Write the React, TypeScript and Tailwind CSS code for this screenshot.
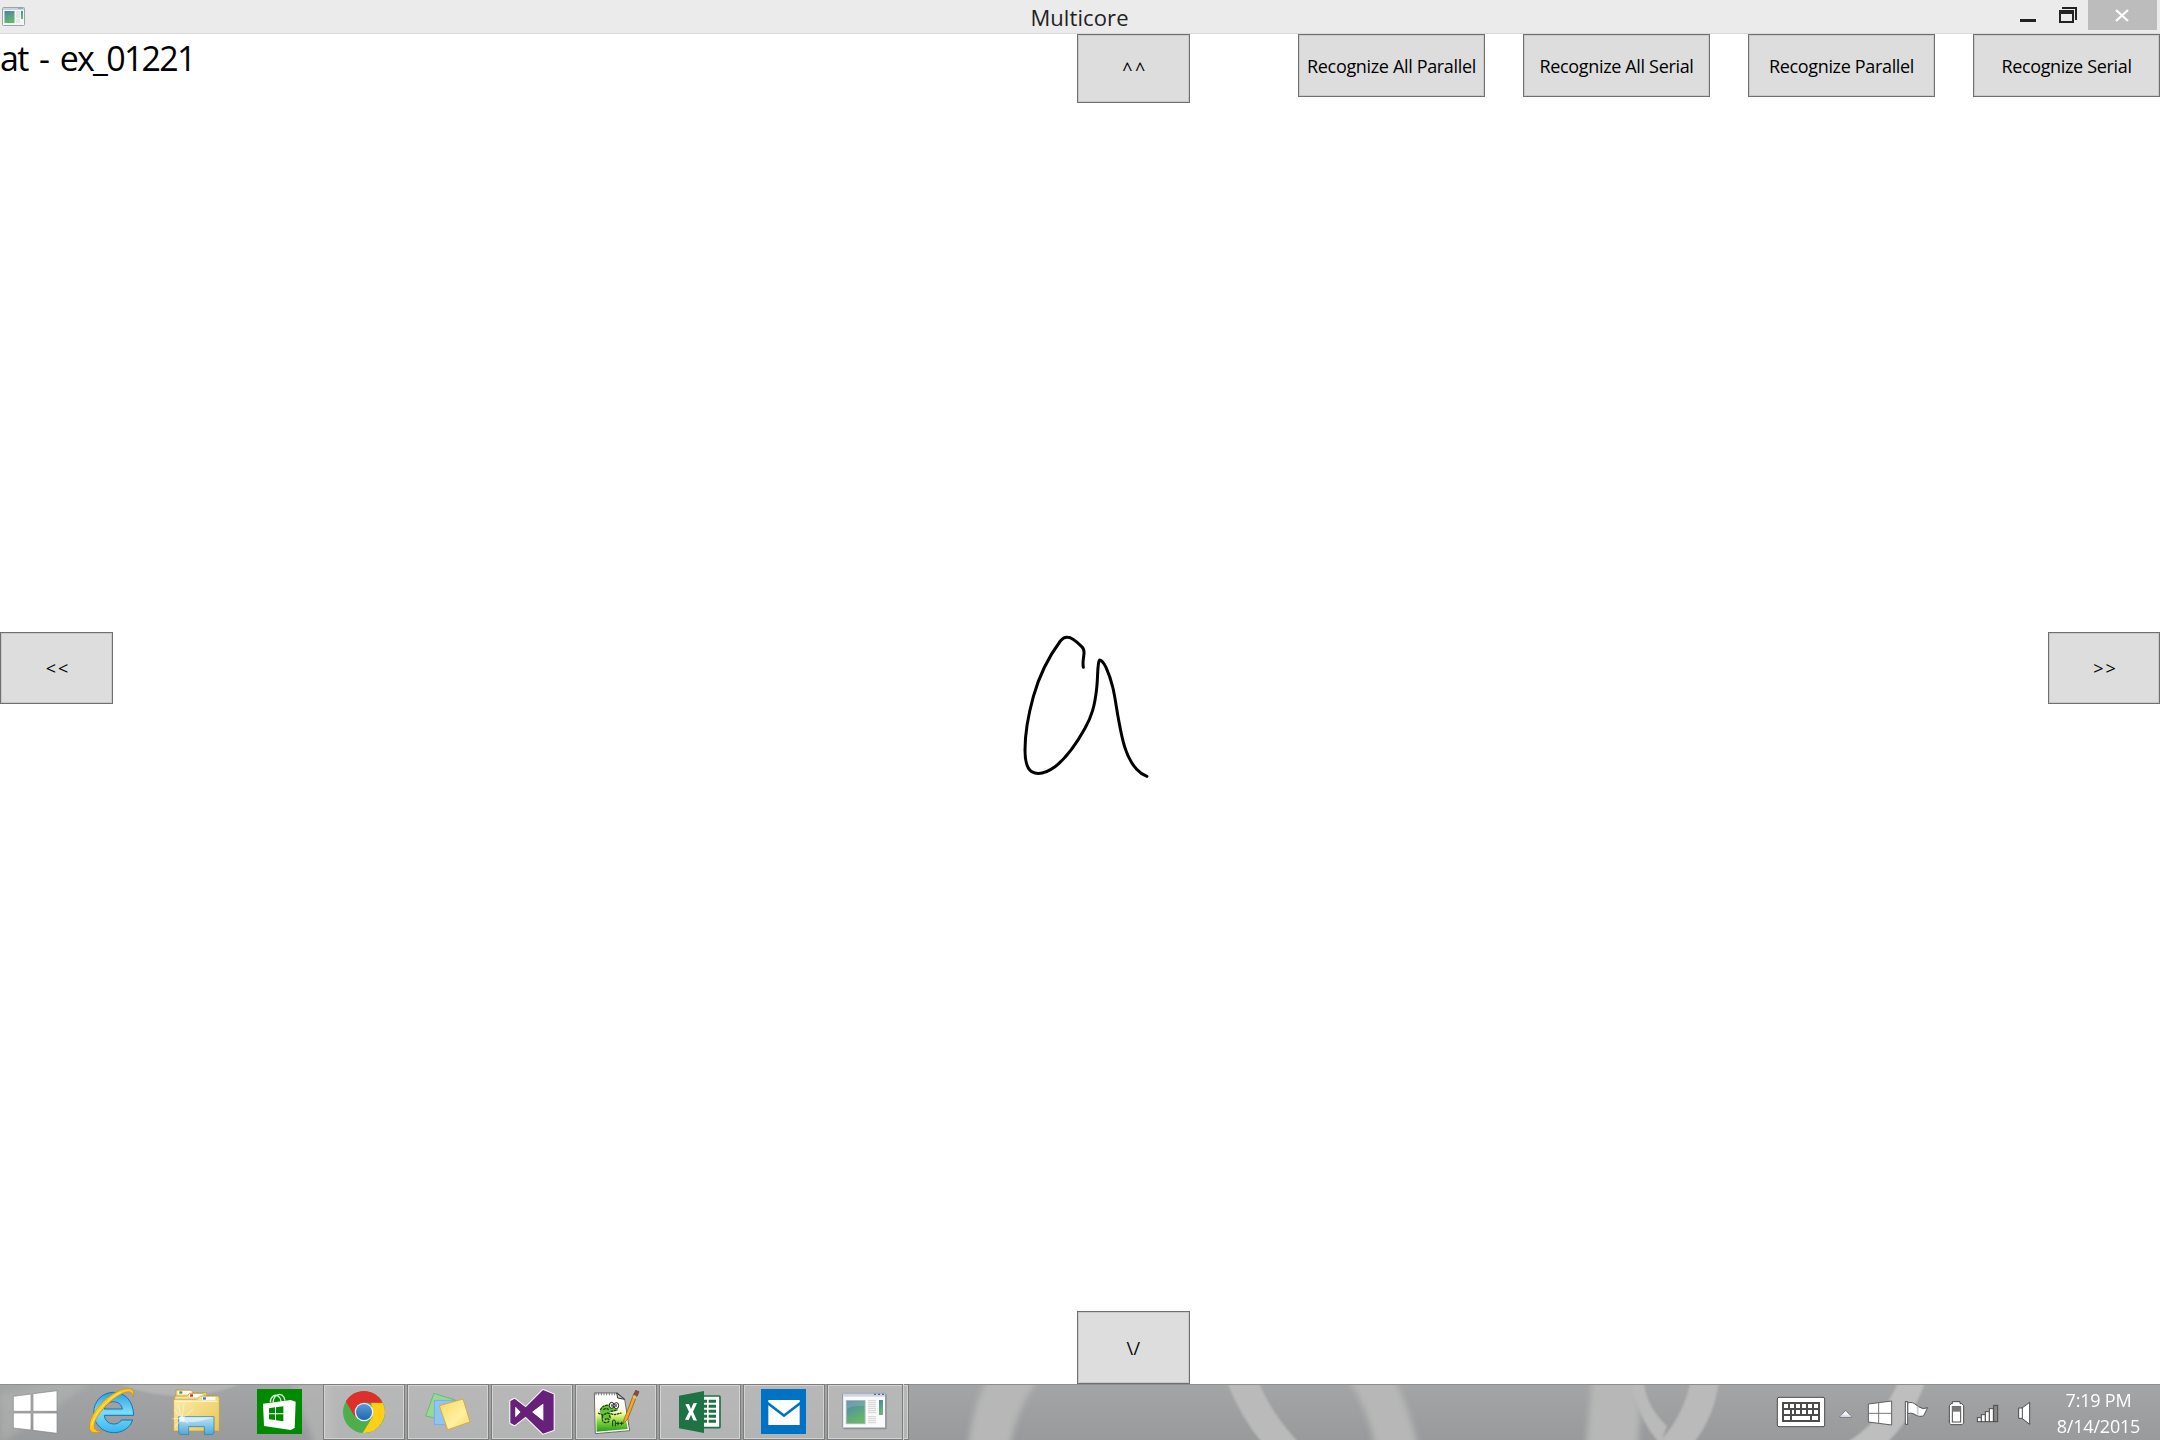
import type { ReactNode } from 'react'
import clsx from 'clsx'

function WpfButton({ className, children }: { className?: string; children: ReactNode }) {
  return (
    <button
      className={clsx(
        'flex shrink-0 items-center justify-center whitespace-pre border border-[#707070] bg-[#dddddd] text-[18px] leading-6 text-black shadow-[inset_0_0_0_1px_#c9c9c9]',
        className,
      )}
    >
      {children}
    </button>
  )
}

function AppIcon() {
  return (
    <svg className="h-5 w-6" viewBox="0 0 24 20">
      <rect x="0.5" y="0.5" width="22" height="18" rx="1" fill="#f4f5f6" stroke="#9aa3ad" />
      <rect x="1" y="1" width="21" height="2" fill="#ccd3dc" />
      <rect x="16" y="1" width="5" height="1" fill="#9aa9c4" />
      <rect x="2.5" y="4" width="10" height="12" fill="url(#appPane)" />
      <rect x="14" y="4" width="4" height="7" fill="#e6e6e6" />
      <rect x="14" y="12" width="4" height="4" fill="#e6e6e6" />
      <rect x="19" y="4" width="2" height="8" fill="url(#appPane)" />
    </svg>
  )
}

function TitleBar() {
  return (
    <header className="flex h-[34px] border-b border-[#dadada] bg-[#ebebeb]">
      <div className="flex flex-1 pl-[2px] pt-[7px]">
        <AppIcon />
      </div>
      <h1 className="pt-[2px] text-[22px] leading-[30px] tracking-[0.1px] text-[#222]">Multicore</h1>
      <div className="flex flex-1 justify-end pr-[3px]">
        <svg className="h-[30px] w-[77px]" viewBox="0 0 77 30">
          <rect x="9" y="19" width="16" height="3" fill="#222" />
          <path d="M51 8h14v12" fill="none" stroke="#222" strokeWidth="2" />
          <path fillRule="evenodd" d="M48 10h15v13H48zM50 14v7h11v-7z" fill="#222" />
        </svg>
        <button className="h-[30px] w-[69px] bg-[#bcbcbc]">
          <svg className="h-[30px] w-[69px]" viewBox="0 0 69 30">
            <path d="M28 10l12 11M40 10L28 21" stroke="#fff" strokeWidth="2.2" />
          </svg>
        </button>
      </div>
    </header>
  )
}

// Handwritten stroke on the ink canvas
function Ink() {
  return (
    <svg className="pointer-events-none absolute left-[1000px] top-[576px] h-[190px] w-[180px]" viewBox="0 0 540 570">
      <path
        d="M250 172C247 155 251 146 252 130Q253 117 245 110C232 97 215 82 203 82Q192 80 181 93C150 135 118 195 100 260C82 325 75 385 75 420C75 450 80 475 95 485C115 496 140 488 165 470C195 448 230 400 255 355C275 318 284 290 290 235C294 200 292 160 298 151C302 147 312 160 318 172C342 225 345 270 355 325C365 380 375 440 410 478Q422 492 441 499"
        fill="none"
        stroke="#000"
        strokeWidth="9"
        strokeLinecap="round"
        strokeLinejoin="round"
      />
    </svg>
  )
}

// Blurred wallpaper showing through the taskbar
function Wallpaper() {
  return (
    <svg className="absolute inset-0 h-14 w-[2160px]" viewBox="0 0 2160 56" preserveAspectRatio="none">
      <defs>
        <linearGradient id="barBg" x1="0" y1="0" x2="0" y2="1">
          <stop offset="0" stopColor="#a4a5a6" />
          <stop offset="1" stopColor="#999a9c" />
        </linearGradient>
        <filter id="soft" x="-20%" y="-20%" width="140%" height="140%">
          <feGaussianBlur stdDeviation="3" />
        </filter>
        <filter id="crisp" x="-20%" y="-20%" width="140%" height="140%">
          <feGaussianBlur stdDeviation="1.2" />
        </filter>
      </defs>
      <rect width="2160" height="56" fill="url(#barBg)" />
      <g filter="url(#soft)" fill="#b6b7b6">
        <path d="M0 10Q60 -5 90 0L0 60z" opacity="0.5" />
        <path d="M290 -6h40l5 68h-20z" opacity="0.7" />
        <path d="M988 -6h52q-22 26-30 68h-42q5-42 20-68z" />
        <path d="M1348 -6h46q16 32 24 68h-43q-6-34-27-68z" />
        <path d="M1592 -6h50l-4 68h-52z" />
      </g>
      <g filter="url(#crisp)" fill="#b9bab9">
        <path d="M110 -4Q180 28 250 -4z" opacity="0.7" />
        <path d="M1226 -4h32q12 32 42 64h-37q-22-26-37-64z" />
        <path d="M1631 -4h12q4 28 24 46l-7 18q-24-28-29-64z" />
        <path d="M1691 -4h28q-4 36-26 64h-36q26-26 34-64z" />
        <path d="M1899 -4h27q-12 36-40 64h-42q38-22 55-64z" fill="#bdbebd" />
      </g>
      <rect width="2160" height="1" fill="#8e8e8e" />
    </svg>
  )
}

function StartIcon() {
  return (
    <svg className="relative h-14 w-[70px]" viewBox="0 42 210 168">
      <g fill="#fff" stroke="#858585" strokeWidth="2">
        <path d="M40 79L93 72V124H40zM99 71L171 62V124H99zM40 129H93V180L40 174zM99 129H171V190L99 181z" />
      </g>
    </svg>
  )
}

function IeIcon() {
  return (
    <svg className="relative h-14 w-[82px]" viewBox="213 42 246 168">
      <defs>
        <linearGradient id="ieBlue" x1="0" y1="0" x2="0" y2="1">
          <stop offset="0" stopColor="#2e9fe0" />
          <stop offset="0.5" stopColor="#7adcf8" />
          <stop offset="1" stopColor="#37b6ee" />
        </linearGradient>
      </defs>
      <path
        fillRule="evenodd"
        d="M341 67C374 67 400 92 401 136H313C316 166 354 169 364 150H398C389 175 367 188 341 188C308 188 281 163 281 129C281 92 308 67 341 67zM313 117H367C363 88 319 88 313 117z"
        fill="url(#ieBlue)"
        stroke="#1773b5"
        strokeWidth="3"
      />
      <path
        d="M400 80C407 55 385 49 354 64C312 84 275 127 269 162C265 189 281 194 309 182C290 186 280 180 283 163C289 135 323 95 360 74C381 62 398 61 400 80z"
        fill="#ffc81a"
        stroke="#d08a08"
        strokeWidth="2"
      />
      <path d="M275 166C281 134 322 86 362 67" fill="none" stroke="#ffea80" strokeWidth="3" />
    </svg>
  )
}

function ExplorerIcon() {
  return (
    <svg className="relative h-14 w-[82px]" viewBox="465 42 246 168">
      <defs>
        <linearGradient id="folder" x1="0" y1="0" x2="1" y2="1">
          <stop offset="0" stopColor="#fbeeb0" />
          <stop offset="1" stopColor="#e9c452" />
        </linearGradient>
        <linearGradient id="stand" x1="0" y1="0" x2="0" y2="1">
          <stop offset="0" stopColor="#bfe5f6" />
          <stop offset="1" stopColor="#4fa6d8" />
        </linearGradient>
      </defs>
      <path d="M528 92V60H572L578 68H620V92z" fill="#f3dc8a" stroke="#b99135" strokeWidth="2" />
      <rect x="533" y="63" width="42" height="10" fill="#fff" />
      <rect x="538" y="64" width="9" height="7" fill="#2fa03a" />
      <path d="M524 98V78H562L568 70H608L616 78H652V98z" fill="#f5df90" stroke="#b99135" strokeWidth="2" />
      <rect x="567" y="72" width="40" height="10" fill="#fff" />
      <rect x="570" y="73" width="9" height="7" fill="#e02b20" />
      <path d="M521 88H590L602 78H654L658 84V183H521z" fill="url(#folder)" stroke="#c39a3a" strokeWidth="2" />
      <rect x="606" y="81" width="40" height="10" fill="#fff" />
      <rect x="609" y="82" width="9" height="7" fill="#2f83d8" />
      <path d="M526 94H597L606 94H653" stroke="#fff4c4" strokeWidth="3" fill="none" />
      <path
        d="M536 140H642V186Q642 194 633 194H613V170H566V194H544Q536 194 536 186z"
        fill="url(#stand)"
        stroke="#3588b8"
        strokeWidth="2.5"
      />
      <path d="M539 155Q590 162 639 142H539z" fill="#e2f5fc" opacity="0.7" />
      <g stroke="#fff" strokeWidth="2" opacity="0.75">
        <path d="M546 146L522 118M546 146L552 100M546 146L580 118M546 146H517M546 146L524 172M546 146L566 162M546 146L534 104" />
      </g>
      <circle cx="546" cy="146" r="8" fill="#fff" opacity="0.7" />
    </svg>
  )
}

function StoreIcon() {
  return (
    <svg className="relative h-14 w-[82px]" viewBox="717 42 246 168">
      <rect x="771" y="57" width="135" height="135" fill="#008a00" />
      <path
        d="M811 97C811 80 824 72 834 78Q842 83 843 95M819 97C821 72 843 67 852 82L855 92"
        fill="none"
        stroke="#d9efd9"
        strokeWidth="4"
      />
      <path d="M789 101L872 90L887 95L884 174L872 180L792 168z" fill="#fff" />
      <path d="M807 115L825 112V130H807zM828 112L850 109V130H828zM807 133H825V150L807 148zM828 133H850V154L828 151z" fill="#008a00" />
    </svg>
  )
}

function ChromeIcon() {
  return (
    <svg className="relative h-14 w-[82px]" viewBox="9 42 246 168">
      <circle cx="132" cy="126" r="63" fill="#4cae4c" />
      <path d="M78 94A63 63 0 0 1 187 97H132L105 140z" fill="#dd2f2b" />
      <path d="M187 97A63 63 0 0 1 128 189L158 140L154 97z" fill="#fdd017" />
      <path d="M78 94L106 142L114 110L132 98H188A63 63 0 0 0 78 94z" fill="#dd2f2b" />
      <circle cx="132" cy="126" r="28" fill="#f2f2f2" />
      <circle cx="132" cy="126" r="24" fill="url(#chromeBlue)" />
      <defs>
        <linearGradient id="chromeBlue" x1="0" y1="0" x2="0" y2="1">
          <stop offset="0" stopColor="#5a9bd8" />
          <stop offset="1" stopColor="#1d68b0" />
        </linearGradient>
      </defs>
    </svg>
  )
}

function StickyIcon() {
  return (
    <svg className="relative h-14 w-[82px]" viewBox="261 42 246 168">
      <defs>
        <linearGradient id="noteYellow" x1="0" y1="0" x2="1" y2="1">
          <stop offset="0" stopColor="#fdd75e" />
          <stop offset="0.6" stopColor="#fff0a0" />
          <stop offset="1" stopColor="#fbd868" />
        </linearGradient>
      </defs>
      <path d="M342 70L406 90L386 152L317 138z" fill="#98d796" stroke="#5cb866" strokeWidth="2.5" />
      <rect x="343" y="91" width="64" height="73" fill="#8fc5f4" stroke="#6fabe4" strokeWidth="2.5" />
      <path d="M358 107L429 87L450 156L383 179z" fill="url(#noteYellow)" stroke="#d6a526" strokeWidth="2.5" />
    </svg>
  )
}

function VisualStudioIcon() {
  return (
    <svg className="relative h-14 w-[82px]" viewBox="513 42 246 168">
      <path
        fillRule="evenodd"
        d="M669 60L701 73V180L669 191L617 140L584 166L571 159V93L584 86L617 112zM670 101L637 126L670 152zM586 110V142L601 126z"
        fill="#68217a"
        stroke="#fff"
        strokeWidth="6"
        strokeLinejoin="round"
        paintOrder="stroke"
      />
      <path d="M668 102L637 126L668 151zM587 111V141L601 126z" fill="#fff" />
    </svg>
  )
}

function NotepadIcon() {
  return (
    <svg className="relative h-14 w-[82px]" viewBox="765 42 246 168">
      <defs>
        <linearGradient id="paper" x1="0" y1="0" x2="0" y2="1">
          <stop offset="0" stopColor="#fff" />
          <stop offset="0.3" stopColor="#fdfdf0" />
          <stop offset="0.5" stopColor="#f1f58a" />
          <stop offset="0.7" stopColor="#7fd838" />
          <stop offset="1" stopColor="#2a9a1c" />
        </linearGradient>
      </defs>
      <path d="M823 69H893L914 88L929 182L826 191z" fill="#fff" stroke="#555" strokeWidth="2.5" />
      <path d="M828 84L906 84L923 177L830 185z" fill="url(#paper)" />
      <path d="M890 69L914 88L893 84z" fill="#c9c9c9" stroke="#333" strokeWidth="3" />
      <path d="M828 67v9M836 67v9M844 67v9M852 67v9M860 67v9M868 67v9M876 67v9M884 67v9" stroke="#777" strokeWidth="3" />
      <path d="M839 125Q841 107 859 106L870 102L895 114L889 123L870 127L873 143L862 150Q842 149 843 133z" fill="#62c634" />
      <path
        d="M841 120Q848 104 866 106M834 129L848 135L862 129L884 134L904 129M848 137Q843 155 856 158Q869 158 867 149Q861 142 855 150M850 119Q858 113 866 119M872 124L893 120M868 136L872 146"
        fill="none"
        stroke="#273b20"
        strokeWidth="4"
        strokeDasharray="8 2"
      />
      <ellipse cx="875" cy="106" rx="7" ry="9" fill="#fff" stroke="#222" strokeWidth="3" />
      <ellipse cx="889" cy="107" rx="7" ry="9" fill="#fff" stroke="#222" strokeWidth="3" />
      <path d="M876 103v7M888 103v7" stroke="#222" strokeWidth="4" />
      <path d="M878 169V152Q884 146 886 154V169M888 160H899M894 155V166M900 160H910M905 155V165" stroke="#16331a" strokeWidth="3" fill="none" />
      <path d="M909 161L913 146L942 70L952 74L922 149z" fill="#f6a821" stroke="#7b5315" strokeWidth="2" />
      <path d="M942 73L947 61L957 65L952 77z" fill="#8b4a43" stroke="#663a34" strokeWidth="2" />
      <path d="M939 80L950 84" stroke="#c9ccd2" strokeWidth="5" />
    </svg>
  )
}

function ExcelIcon() {
  return (
    <svg className="relative h-14 w-[82px]" viewBox="57 42 246 168">
      <rect x="170" y="78" width="70" height="95" rx="3" fill="#fff" stroke="#1f7244" strokeWidth="5" />
      <path
        d="M192 94H201M206 94H228M192 109H201M206 109H228M192 124H201M206 124H228M192 139H201M206 139H228M192 154H201M206 154H228"
        stroke="#1f7244"
        strokeWidth="9"
      />
      <path d="M117 77L192 63V189L117 175z" fill="#1f7244" />
      <path d="M136 103L147 102L153 117L160 100L171 99L159 125L171 152L160 151L153 134L146 150L135 149L147 125z" fill="#fff" />
    </svg>
  )
}

function MailIcon() {
  return (
    <svg className="relative h-14 w-[82px]" viewBox="309 42 246 168">
      <rect x="363" y="57" width="135" height="135" fill="#0072c6" />
      <path d="M385 90H479V96L432 132L385 96z" fill="#fff" />
      <path d="M385 106L432 142L479 106V165H385z" fill="#fff" />
    </svg>
  )
}

function WindowIcon() {
  return (
    <svg className="relative h-14 w-[82px]" viewBox="561 42 246 168">
      <defs>
        <linearGradient id="appPane" x1="0" y1="0" x2="0.4" y2="1">
          <stop offset="0" stopColor="#4d7fa8" />
          <stop offset="0.5" stopColor="#55a08d" />
          <stop offset="1" stopColor="#66b866" />
        </linearGradient>
      </defs>
      <rect x="610" y="72" width="130" height="106" rx="3" fill="#777" opacity="0.6" />
      <rect x="608" y="70" width="129" height="104" rx="2" fill="#fafafa" stroke="#8794a5" strokeWidth="3" />
      <rect x="610" y="71" width="125" height="9" fill="#cbd5e2" />
      <path d="M702 73h6M714 73h6M726 73h6" stroke="#486994" strokeWidth="4" />
      <rect x="619" y="92" width="56" height="69" fill="url(#appPane)" stroke="#a9aebb" strokeWidth="3" />
      <path d="M621 117Q640 105 673 108V94H621z" fill="#fff" opacity="0.16" />
      <path
        d="M684 92H708M684 98H708M684 104H708M684 110H708M684 116H708M684 122H708M684 128H708M684 140H708M684 146H708M684 152H708M684 158H708"
        stroke="#d2d2d2"
        strokeWidth="3"
      />
      <rect x="717" y="90" width="12" height="45" fill="url(#appPane)" />
    </svg>
  )
}

const tasks = [
  { name: 'ie', icon: <IeIcon />, open: false },
  { name: 'explorer', icon: <ExplorerIcon />, open: false },
  { name: 'store', icon: <StoreIcon />, open: false },
  { name: 'chrome', icon: <ChromeIcon />, open: true },
  { name: 'sticky', icon: <StickyIcon />, open: true },
  { name: 'vs', icon: <VisualStudioIcon />, open: true },
  { name: 'notepad', icon: <NotepadIcon />, open: true },
  { name: 'excel', icon: <ExcelIcon />, open: true },
  { name: 'mail', icon: <MailIcon />, open: true },
  { name: 'window', icon: <WindowIcon />, open: true, stacked: true },
]

function Tray() {
  return (
    <div className="relative ml-auto flex">
      {/* keyboard */}
      <svg className="h-14 w-[54px]" viewBox="105 42 162 168">
        <rect x="112" y="82" width="142" height="88" rx="5" fill="#fff" stroke="#4c4c4c" strokeWidth="3" />
        <rect x="126" y="96" width="114" height="60" fill="#4c4c4c" />
        <path
          d="M132 108H144M150 108H162M168 108H180M186 108H198M204 108H216M222 108H234M132 126H150M156 126H162M168 126H180M186 126H198M204 126H216M222 126H234M132 144H150M156 144H210M216 144H234"
          stroke="#fff"
          strokeWidth="12"
        />
      </svg>
      {/* show hidden icons */}
      <svg className="h-14 w-[30px]" viewBox="267 42 90 168">
        <path d="M300 139L317 121L334 139V142H300z" fill="#f4f4f8" stroke="#666a74" strokeWidth="2.5" strokeLinejoin="round" />
        <path d="M301 138H333" stroke="#c8cfe0" strokeWidth="3" />
      </svg>
      <svg className="h-14 w-[41px]" viewBox="357 42 123 168">
        <path d="M385 102L455 93V165L385 156z" fill="#fff" stroke="#5e5e5e" strokeWidth="3" />
        <path d="M416 98V161M385 130H455" stroke="#777" strokeWidth="3" />
      </svg>
      {/* action center flag */}
      <svg className="h-14 w-10" viewBox="480 42 120 168">
        <path d="M503 99C518 94 525 102 535 110Q550 120 563 113L551 137C540 142 530 137 522 132Q512 127 503 131z" fill="#fff" stroke="#555" strokeWidth="3" />
        <path d="M533 110V134" stroke="#ccc" strokeWidth="5" />
        <rect x="496" y="95" width="7" height="68" fill="#fff" stroke="#555" strokeWidth="3" />
      </svg>
      <svg className="h-14 w-[31px]" viewBox="600 42 93 168">
        <path d="M637 95H660V101H665L671 107V159L666 164H633L628 159V107L633 101H637z" fill="#fff" stroke="#4c4c4c" strokeWidth="3" />
        <rect x="637" y="110" width="25" height="46" fill="#fff" stroke="#4c4c4c" strokeWidth="3" />
        <rect x="637" y="110" width="25" height="15" fill="#777" />
      </svg>
      <svg className="h-14 w-[37px]" viewBox="693 42 111 168">
        <g fill="#fff" stroke="#4c4c4c" strokeWidth="3">
          <rect x="712" y="143" width="12" height="12" />
          <rect x="724" y="134" width="12" height="21" />
          <rect x="736" y="125" width="12" height="30" />
          <rect x="748" y="116" width="12" height="39" />
          <rect x="761" y="106" width="12" height="49" fill="#888" />
        </g>
      </svg>
      <svg className="h-14 w-[31px]" viewBox="804 42 93 168">
        <path d="M836 114H846L869 97V163L846 145H836z" fill="#fff" stroke="#4c4c4c" strokeWidth="3" />
        <path d="M847 114V145" stroke="#4c4c4c" strokeWidth="3" />
      </svg>
      <div className="flex w-[121px] flex-col items-center pr-[2px] pt-[3px] text-[18px] leading-[26px] text-white">
        <span className="tracking-[-0.2px]">7:19 PM</span>
        <span className="tracking-[-0.2px]">8/14/2015</span>
      </div>
    </div>
  )
}

function Taskbar() {
  return (
    <footer className="relative flex h-14 overflow-hidden">
      <Wallpaper />
      <StartIcon />
      <div className="relative ml-px flex gap-[2px]">
        {tasks.map((task) => (
          <div
            key={task.name}
            className={clsx(
              'flex h-14 w-[82px]',
              task.open && 'bg-[#c4c4c4]/60 shadow-[inset_0_0_0_1px_#7c7c7c,inset_0_0_0_2px_#d2d2d2]',
            )}
          >
            {task.icon}
            {task.stacked && <div className="-ml-[7px] h-14 w-[2px] border-l border-[#7c7c7c] bg-[#d2d2d2]" />}
          </div>
        ))}
      </div>
      <Tray />
    </footer>
  )
}

export default function App() {
  return (
    <div className="flex h-[1440px] w-[2160px] flex-col overflow-hidden bg-white font-['Open_Sans','Noto_Sans',sans-serif]">
      <TitleBar />
      <main className="relative flex flex-1 flex-col">
        <div className="flex h-[69px] items-start">
          <div className="w-[1077px] text-[34px] leading-[48px] tracking-[-1.75px] text-black [word-spacing:4.4px]">
            at - ex_01221
          </div>
          <WpfButton className="h-[69px] w-[113px] pl-[3px] tracking-[2.5px]">^^</WpfButton>
          <div className="ml-auto flex gap-[38px]">
            <WpfButton className="h-[63px] w-[187px] tracking-[-0.34px]">Recognize All Parallel</WpfButton>
            <WpfButton className="h-[63px] w-[187px] tracking-[-0.34px]">Recognize All Serial</WpfButton>
            <WpfButton className="h-[63px] w-[187px] tracking-[-0.34px]">Recognize Parallel</WpfButton>
            <WpfButton className="h-[63px] w-[187px] tracking-[-0.34px]">Recognize Serial</WpfButton>
          </div>
        </div>
        <div className="flex flex-1 items-start justify-between pt-[529px]">
          <WpfButton className="h-[72px] w-[113px] pl-[3px] tracking-[2px]">&lt;&lt;</WpfButton>
          <WpfButton className="h-[72px] w-[112px] pl-[3px] tracking-[2px]">&gt;&gt;</WpfButton>
        </div>
        <div className="flex pl-[1077px]">
          <WpfButton className="h-[73px] w-[113px] tracking-[0.5px]">\/</WpfButton>
        </div>
        <Ink />
      </main>
      <Taskbar />
    </div>
  )
}
